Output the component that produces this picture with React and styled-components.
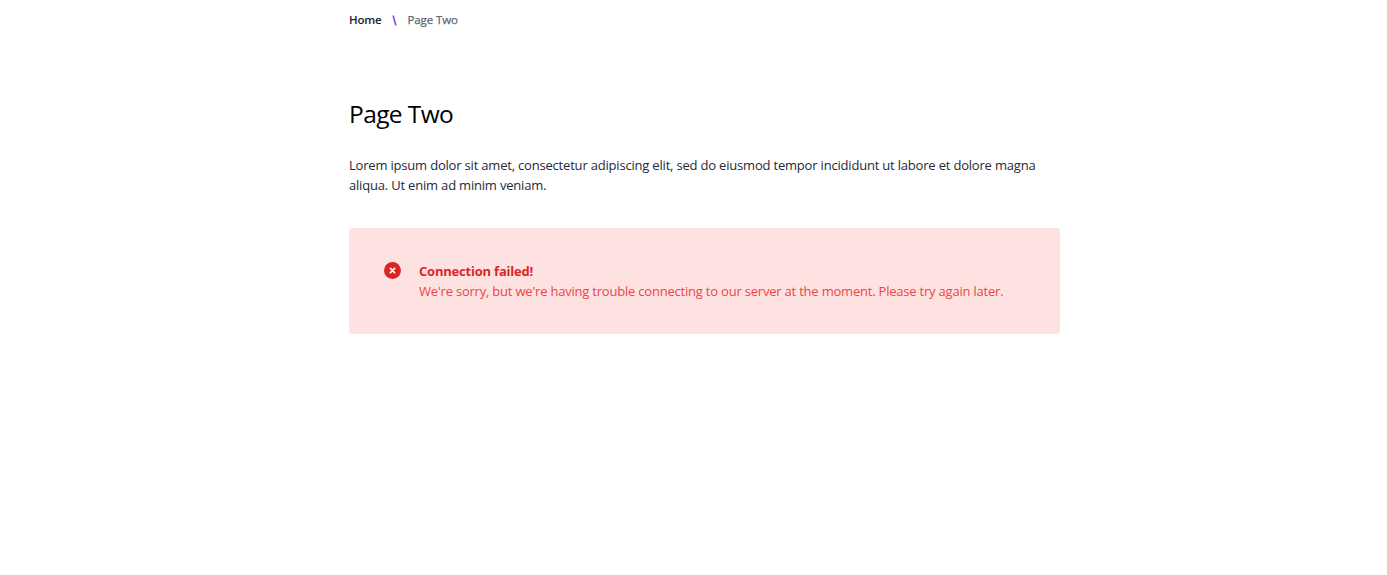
import React from 'react';
import styled, { createGlobalStyle } from 'styled-components';

const GlobalStyle = createGlobalStyle`
  * { box-sizing: border-box; }
  body {
    margin: 0;
    background: #fff;
    color: #1f2937;
    font-family: "Open Sans", "Noto Sans", sans-serif;
  }
`;

const Page = styled.main`
  width: 710.5px;
  margin-left: 349px;
  padding-top: 10px;
`;

const Breadcrumb = styled.nav`
  display: flex;
  align-items: center;
  height: 20px;
  font-size: 11.5px;
  line-height: 20px;
  white-space: nowrap;
`;

const Crumb = styled.span`
  color: ${(p) => (p.$current ? '#5b6573' : '#1b212c')};
  font-weight: ${(p) => (p.$current ? 400 : 600)};
  letter-spacing: ${(p) => (p.$current ? '-0.1px' : '-0.2px')};
  -webkit-text-stroke: ${(p) => (p.$current ? '0.25px #5b6573' : '0')};
`;

const Separator = styled.svg`
  width: 5px;
  height: 11px;
  margin: 0 10.5px 0 10.5px;
`;

const Title = styled.h1`
  margin: 64px 0 0;
  font-size: 24.5px;
  font-weight: 400;
  letter-spacing: -0.6px;
  line-height: 40px;
  color: #000;
`;

const Intro = styled.p`
  margin: 21px 0 0;
  font-size: 13px;
  letter-spacing: -0.193px;
  line-height: 20px;
  white-space: pre-line;
`;

const Alert = styled.section`
  display: flex;
  gap: 18px;
  height: 106px;
  margin-top: 32.5px;
  padding: 33.5px 35px;
  border-radius: 3.5px;
  background: #fee2e2;
  font-size: 13px;
  line-height: 20px;
`;

const AlertIcon = styled.svg`
  flex: none;
  width: 17px;
  height: 17px;
  margin-top: 1px;
`;

const AlertTitle = styled.strong`
  display: block;
  color: #dc2626;
  font-weight: 700;
  letter-spacing: -0.21px;
`;

const AlertText = styled.p`
  margin: 0;
  color: #ef4444;
  letter-spacing: -0.208px;
  white-space: nowrap;
`;

export default function App() {
  return (
    <>
      <GlobalStyle />
      <Page>
        <Breadcrumb aria-label="Breadcrumb">
          <Crumb>Home</Crumb>
          <Separator viewBox="0 0 5 11" aria-hidden="true">
            <path d="M0.3 0.5H2L4.7 10.5H3Z" fill="#8a50d8" />
          </Separator>
          <Crumb $current>Page Two</Crumb>
        </Breadcrumb>
        <Title>Page Two</Title>
        <Intro>
          {'Lorem ipsum dolor sit amet, consectetur adipiscing elit, sed do eiusmod tempor incididunt ut labore et dolore magna\naliqua. Ut enim ad minim veniam.'}
        </Intro>
        <Alert role="alert">
          <AlertIcon viewBox="0 0 17 17" aria-hidden="true">
            <circle cx="8.5" cy="8.5" r="8.5" fill="#dc2626" />
            <path d="M6.4 6.4l4.2 4.2M10.6 6.4l-4.2 4.2" stroke="#fff" strokeWidth="1.7" strokeLinecap="round" />
          </AlertIcon>
          <div>
            <AlertTitle>Connection failed!</AlertTitle>
            <AlertText>
              We're sorry, but we're having trouble connecting to our server at the moment. Please try again later.
            </AlertText>
          </div>
        </Alert>
      </Page>
    </>
  );
}
